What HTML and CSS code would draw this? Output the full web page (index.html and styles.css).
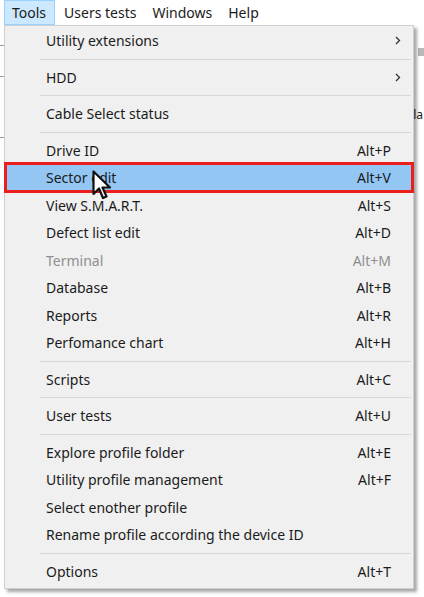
FILE: index.html
```html
<!DOCTYPE html>
<html>
<head>
<meta charset="utf-8">
<link rel="stylesheet" href="styles.css">
</head>
<body>
<div class="app">
  <div class="menubar">
    <span class="mb-item active">Tools</span>
    <span class="mb-item">Users tests</span>
    <span class="mb-item">Windows</span>
    <span class="mb-item">Help</span>
  </div>
  <div class="backdrop">
    <div class="bg-left"><span class="l1"></span><span class="l2"></span><span class="l3"></span></div>
    <div class="bg-right"><span class="gray"></span><span class="la">la</span></div>
  </div>
  <div class="dropdown">
    <div class="item"><span class="label">Utility extensions</span><svg class="chev" width="6" height="9" viewBox="0 0 6 9"><path d="M1 1 L4.5 4.5 L1 8" fill="none" stroke="#333" stroke-width="1.3"/></svg></div>
    <div class="sep"></div>
    <div class="item"><span class="label">HDD</span><svg class="chev" width="6" height="9" viewBox="0 0 6 9"><path d="M1 1 L4.5 4.5 L1 8" fill="none" stroke="#333" stroke-width="1.3"/></svg></div>
    <div class="sep"></div>
    <div class="item"><span class="label">Cable Select status</span></div>
    <div class="sep"></div>
    <div class="item"><span class="label">Drive ID</span><span class="key">Alt+P</span></div>
    <div class="item selected"><span class="label">Sector edit</span><span class="key">Alt+V</span>
      <svg class="cursor" width="20" height="32" viewBox="0 0 20 32"><path d="M1.5 1.5 L1.5 24 L7 18.5 L11 28 L14.5 26.5 L10.5 17.5 L18 17.5 Z" fill="#fff" stroke="#111" stroke-width="2.2" stroke-linejoin="round"/></svg>
    </div>
    <div class="item"><span class="label">View S.M.A.R.T.</span><span class="key">Alt+S</span></div>
    <div class="item"><span class="label">Defect list edit</span><span class="key">Alt+D</span></div>
    <div class="item disabled"><span class="label">Terminal</span><span class="key">Alt+M</span></div>
    <div class="item"><span class="label">Database</span><span class="key">Alt+B</span></div>
    <div class="item"><span class="label">Reports</span><span class="key">Alt+R</span></div>
    <div class="item"><span class="label">Perfomance chart</span><span class="key">Alt+H</span></div>
    <div class="sep"></div>
    <div class="item"><span class="label">Scripts</span><span class="key">Alt+C</span></div>
    <div class="sep"></div>
    <div class="item"><span class="label">User tests</span><span class="key">Alt+U</span></div>
    <div class="sep"></div>
    <div class="item"><span class="label">Explore profile folder</span><span class="key">Alt+E</span></div>
    <div class="item"><span class="label">Utility profile management</span><span class="key">Alt+F</span></div>
    <div class="item"><span class="label">Select enother profile</span></div>
    <div class="item"><span class="label">Rename profile according the device ID</span></div>
    <div class="sep"></div>
    <div class="item"><span class="label">Options</span><span class="key">Alt+T</span></div>
  </div>
</div>
</body>
</html>
```
FILE: styles.css
```css
html, body {
  margin: 0;
  padding: 0;
  background: #ffffff;
}
.app {
  position: relative;
  width: 424px;
  height: 597px;
  overflow: hidden;
  font-family: "Noto Sans", "Open Sans", sans-serif;
  color: #1b1b1b;
}
.menubar {
  display: flex;
  height: 25px;
  align-items: stretch;
  padding-left: 4px;
  font-size: 14px;
}
.mb-item {
  display: flex;
  align-items: center;
  padding: 0 6px;
  margin-right: 2px;
  border: 1px solid transparent;
  box-sizing: border-box;
}
.mb-item.active {
  background: #cce8ff;
  border-color: #99d1ff;
  padding: 0 8px 0 7px;
}
.backdrop {
  display: flex;
  justify-content: space-between;
  height: 572px;
}
.bg-left {
  width: 4px;
  display: flex;
  flex-direction: column;
}
.bg-left span { display: block; height: 1px; background: #999; }
.bg-left .l1 { margin-top: 20px; }
.bg-left .l2 { margin-top: 30px; }
.bg-left .l3 { margin-top: 60px; }
.bg-right {
  width: 12px;
  display: flex;
  flex-direction: column;
  align-items: flex-end;
}
.bg-right .gray {
  display: block;
  width: 6px;
  height: 8px;
  margin-top: 23px;
  background: #b8b8b8;
}
.bg-right .la {
  margin-top: 52px;
  font-size: 12px;
  line-height: 14px;
  padding-right: 1px;
}
.dropdown {
  position: absolute;
  left: 4px;
  top: 25px;
  width: 410px;
  box-sizing: border-box;
  padding: 1px 2px 3px;
  background: #f0f0f0;
  border: 1px solid #cfcfcf;
  box-shadow: 3px 3px 3px rgba(0, 0, 0, 0.35);
  font-size: 14px;
}
.item {
  position: relative;
  display: flex;
  align-items: center;
  height: 27.5px;
  padding-left: 39px;
  padding-right: 20px;
}
.label { flex: 1; white-space: nowrap; }
.key { white-space: nowrap; }
.chev { margin-right: -10px; }
.sep {
  height: 9px;
  display: flex;
  align-items: center;
  padding-left: 33px;
}
.sep::before {
  content: "";
  display: block;
  flex: 1;
  height: 1px;
  background: #d7d7d7;
}
.disabled { color: #8f8f8f; }
.selected {
  background: #93c6f3;
}
.selected::after {
  content: "";
  position: absolute;
  left: -3px;
  right: -3px;
  top: -2px;
  bottom: -1px;
  border: 3px solid #ea1f1b;
}
.cursor {
  position: absolute;
  left: 85px;
  top: 6px;
  z-index: 2;
}
```
